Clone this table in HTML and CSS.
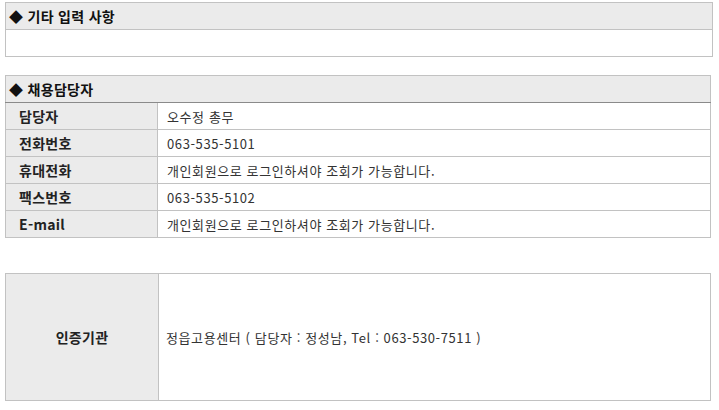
FILE: index.html
```html
<!DOCTYPE html>
<html lang="ko">
<head>
<meta charset="utf-8">
<link rel="stylesheet" href="styles.css">
</head>
<body>
<div class="page">
  <table class="box box-wide">
    <tr><th class="head">◆ 기타 입력 사항</th></tr>
    <tr><td class="empty"></td></tr>
  </table>

  <table class="box box-contact">
    <colgroup><col class="col-label"><col></colgroup>
    <tr><th class="head head-dark" colspan="2">◆ 채용담당자</th></tr>
    <tr><th class="label">담당자</th><td class="value">오수정 총무</td></tr>
    <tr><th class="label">전화번호</th><td class="value">063-535-5101</td></tr>
    <tr><th class="label">휴대전화</th><td class="value">개인회원으로 로그인하셔야 조회가 가능합니다.</td></tr>
    <tr><th class="label">팩스번호</th><td class="value">063-535-5102</td></tr>
    <tr><th class="label">E-mail</th><td class="value">개인회원으로 로그인하셔야 조회가 가능합니다.</td></tr>
  </table>

  <table class="box box-cert">
    <colgroup><col class="col-cert"><col></colgroup>
    <tr><th class="cert-label">인증기관</th><td class="cert-value">정읍고용센터 ( 담당자 : 정성남, Tel : 063-530-7511 )</td></tr>
  </table>
</div>
</body>
</html>
```
FILE: styles.css
```css
html, body {
  margin: 0;
  padding: 0;
  background: #fff;
}
body {
  font-family: "Noto Sans CJK KR", "Noto Sans", sans-serif;
  font-size: 13px;
  letter-spacing: 0.6px;
  color: #333;
}
.page {
  padding: 2px 0 0 5px;
}
.box {
  border-collapse: collapse;
  border: 1px solid #c2c2c2;
  table-layout: fixed;
}
.box-wide { width: 708px; }
.box-contact { width: 706px; margin-top: 18px; }
.box-cert { width: 706px; margin-top: 35px; }
.col-label { width: 152px; }
.col-cert { width: 153px; }

.head {
  background: #ebebeb;
  height: 26px;
  padding: 0 0 0 3px;
  text-align: left;
  font-weight: bold;
  color: #111;
  font-size: 14px;
  letter-spacing: 0.3px;
  border-bottom: 1px solid #c2c2c2;
}
.head-dark { border-bottom-color: #8a8a8a; }
.empty { height: 26px; padding: 0; }

.label {
  background: #ebebeb;
  text-align: left;
  font-weight: bold;
  font-size: 14px;
  color: #222;
  letter-spacing: 0.3px;
  height: 26px;
  padding: 0 0 0 13px;
  border-bottom: 1px solid #c2c2c2;
  border-right: 1px solid #c2c2c2;
}
.value {
  height: 26px;
  padding: 0 0 0 9px;
  border-bottom: 1px solid #c2c2c2;
}
.cert-label {
  height: 126px;
  background: #ebebeb;
  font-weight: bold;
  font-size: 14px;
  color: #222;
  letter-spacing: 0.3px;
  text-align: center;
  padding: 0;
  border-right: 1px solid #c2c2c2;
}
.cert-value {
  padding: 0 0 0 7px;
}
```
